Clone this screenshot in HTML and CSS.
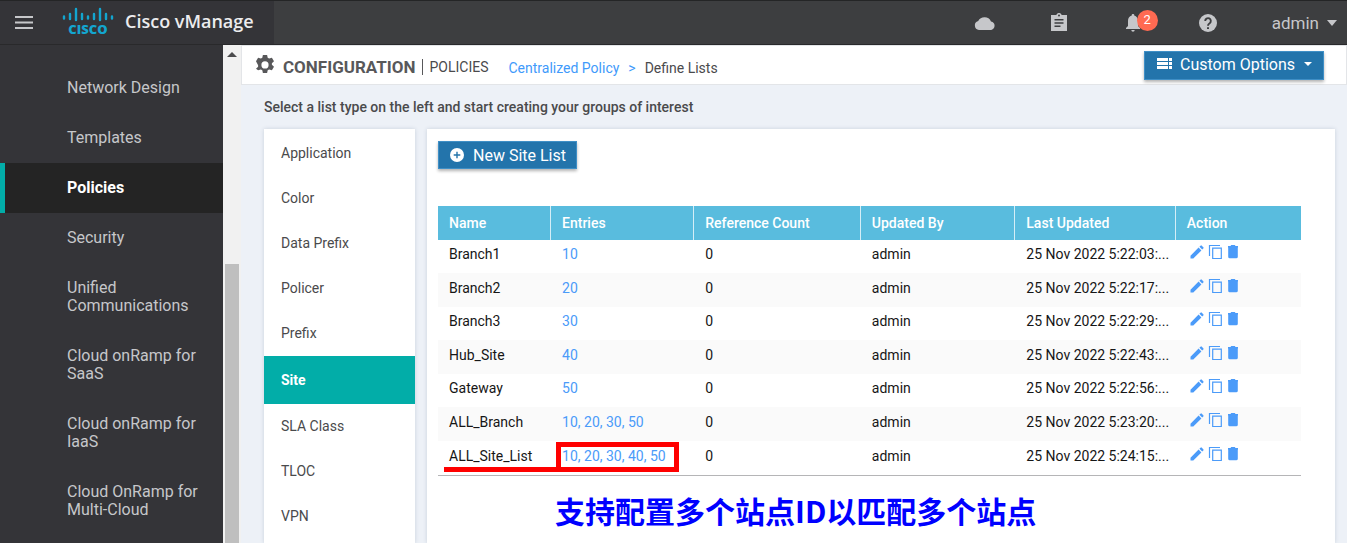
FILE: index.html
```html
<!DOCTYPE html>
<html lang="en">
<head>
<meta charset="utf-8">
<title>Cisco vManage</title>
<link rel="stylesheet" href="styles.css">
</head>
<body>
<svg class="sprite" aria-hidden="true">
  <symbol id="i-edit" viewBox="0 0 16 16"><path d="M1.5 14.5v-2.8L9.6 3.6l2.8 2.8-8.1 8.1zM10.4 2.8l1.1-1.1a.9.9 0 0 1 1.3 0l1.5 1.5a.9.9 0 0 1 0 1.3l-1.1 1.1z"/></symbol>
  <symbol id="i-copy" viewBox="0 0 16 16"><path d="M1.5 12V1.5H12M4.700 4.200h8.600v10.300H4.700z" fill="none" stroke="currentColor" stroke-width="1.200"/></symbol>
  <symbol id="i-trash" viewBox="0 0 12 16"><path d="M1 3.500V2h2.500l.7-.9h3.600l.7.9H11v1.500zM1.200 3.200h9.600v9.500a1.600 1.600 0 0 1-1.600 1.600H2.800a1.600 1.600 0 0 1-1.600-1.600z"/></symbol>
</svg>

<header class="topbar">
  <div class="brand">
    <button class="icon-btn menu" aria-label="Menu"><svg width="18" height="13" viewBox="0 0 18 13"><path d="M0 1h18M0 6.500h18M0 12h18" stroke="currentColor" stroke-width="2"/></svg></button>
    <svg class="logo" width="52" height="30" viewBox="0 0 52 30" role="img" aria-label="Cisco">
      <path d="M2 9.500v2M8 7v5M14 2v11M20 7v5M26 9.500v2M32 7v5M38 2v11M44 7v5M50 9.500v2" stroke="#13a5cf" stroke-width="2.400" stroke-linecap="round"/>
      <text x="26" y="27" text-anchor="middle">CISCO</text>
    </svg>
    <span class="product">Cisco vManage</span>
  </div>
  <nav class="tools" aria-label="Tools">
    <button class="icon-btn" aria-label="Cloud"><svg width="22" height="16" viewBox="0 0 22 16"><path d="M5 15a4.600 4.600 0 0 1-.8-9A7.200 7.200 0 0 1 17 6.400 4.400 4.400 0 0 1 17.200 15z" fill="currentColor"/></svg></button>
    <button class="icon-btn" aria-label="Tasks"><svg width="16" height="19" viewBox="0 0 16 19"><path fill="currentColor" fill-rule="evenodd" d="M0 2h5.300a2.800 2.800 0 0 1 5.400 0H16v16H0zM8 1.500a1 1 0 1 0 0 2 1 1 0 0 0 0-2zM3.500 6v1.500h9V6zm0 3.200v1.500h9V9.200zm0 3.200v1.500h6v-1.500z"/></svg></button>
    <button class="icon-btn bell" aria-label="Alarms, 2 new"><svg width="14" height="18" viewBox="0 0 14 18"><path fill="currentColor" d="M7 0a1.200 1.200 0 0 1 1.200 1.500C10.700 2.100 12 4.200 12 7v5l2 2v1H0v-1l2-2V7c0-2.800 1.300-4.900 3.800-5.500A1.200 1.200 0 0 1 7 0zM5.300 16h3.400a1.700 1.700 0 0 1-3.400 0z"/></svg><span class="badge">2</span></button>
    <button class="icon-btn" aria-label="Help"><svg width="18" height="18" viewBox="0 0 18 18"><circle cx="9" cy="9" r="9" fill="currentColor"/><path d="M6.200 7a2.800 2.800 0 1 1 4.500 2.200C9.500 10 9 10.400 9 11.700" fill="none" stroke="#3d3e40" stroke-width="1.900"/><path d="M8 13.200h2v1.900H8z" fill="#3d3e40"/></svg></button>
    <button class="user">admin <i class="caret"></i></button>
  </nav>
</header>

<div class="shell">
  <nav class="sidebar" aria-label="Main">
    <a href="#">Network Design</a>
    <a href="#">Templates</a>
    <a href="#" class="active">Policies</a>
    <a href="#">Security</a>
    <a href="#">Unified<br>Communications</a>
    <a href="#">Cloud onRamp for<br>SaaS</a>
    <a href="#">Cloud onRamp for<br>IaaS</a>
    <a href="#">Cloud OnRamp for<br>Multi-Cloud</a>
  </nav>
  <div class="scrollbar" aria-hidden="true"><i class="arrow"></i><i class="thumb"></i></div>

  <main class="content">
    <div class="pagebar">
      <svg class="gear" width="20" height="20" viewBox="0 0 20 20"><path fill="currentColor" fill-rule="evenodd" d="M7.900 0h4.200l.6 2.800 1.400.8 2.800-.9 2.100 3.600-2.100 2v1.500l2.100 1.900-2.100 3.600-2.800-.8-1.400.8-.6 2.700H7.900l-.6-2.700-1.400-.8-2.800.8L1 13.700l2.100-1.900v-1.500L1 6.300l2.100-3.600 2.800.9 1.400-.8zM10 6.300a3.600 3.600 0 1 0 0 7.200 3.600 3.600 0 0 0 0-7.200z"/></svg>
      <h1>CONFIGURATION</h1>
      <span class="section">POLICIES</span>
      <div class="crumbs"><a href="#">Centralized Policy</a><span class="sep">&gt;</span><span>Define Lists</span></div>
      <button class="primary custom"><svg width="15" height="12" viewBox="0 0 15 12"><path fill="currentColor" d="M0 0h11v3H0zm12 0h3v3h-3zM0 4h11v3H0zm12 0h3v3h-3zM0 8h11v3H0zm12 0h3v3h-3z"/></svg>Custom Options<i class="caret"></i></button>
    </div>
    <p class="hint">Select a list type on the left and start creating your groups of interest</p>
    <div class="panels">
      <nav class="types" aria-label="List types">
        <a href="#">Application</a>
        <a href="#">Color</a>
        <a href="#">Data Prefix</a>
        <a href="#">Policer</a>
        <a href="#">Prefix</a>
        <a href="#" class="active">Site</a>
        <a href="#">SLA Class</a>
        <a href="#">TLOC</a>
        <a href="#">VPN</a>
      </nav>
      <section class="lists">
        <button class="primary new"><svg width="14" height="14" viewBox="0 0 14 14"><circle cx="7" cy="7" r="7" fill="currentColor"/><path d="M7 3.700v6.600M3.700 7h6.600" stroke="#2374ab" stroke-width="1.400"/></svg>New Site List</button>
        <table>
          <colgroup><col class="c-name"><col class="c-entries"><col class="c-ref"><col class="c-by"><col class="c-date"><col class="c-action"></colgroup>
          <thead><tr><th>Name</th><th>Entries</th><th>Reference Count</th><th>Updated By</th><th>Last Updated</th><th>Action</th></tr></thead>
          <tbody>
            <tr><td>Branch1</td><td><a href="#">10</a></td><td>0</td><td>admin</td><td>25 Nov 2022 5:22:03:...</td><td class="actions"><button aria-label="Edit"><svg><use href="#i-edit"/></svg></button><button aria-label="Copy"><svg><use href="#i-copy"/></svg></button><button aria-label="Delete"><svg class="slim"><use href="#i-trash"/></svg></button></td></tr>
            <tr><td>Branch2</td><td><a href="#">20</a></td><td>0</td><td>admin</td><td>25 Nov 2022 5:22:17:...</td><td class="actions"><button aria-label="Edit"><svg><use href="#i-edit"/></svg></button><button aria-label="Copy"><svg><use href="#i-copy"/></svg></button><button aria-label="Delete"><svg class="slim"><use href="#i-trash"/></svg></button></td></tr>
            <tr><td>Branch3</td><td><a href="#">30</a></td><td>0</td><td>admin</td><td>25 Nov 2022 5:22:29:...</td><td class="actions"><button aria-label="Edit"><svg><use href="#i-edit"/></svg></button><button aria-label="Copy"><svg><use href="#i-copy"/></svg></button><button aria-label="Delete"><svg class="slim"><use href="#i-trash"/></svg></button></td></tr>
            <tr><td>Hub_Site</td><td><a href="#">40</a></td><td>0</td><td>admin</td><td>25 Nov 2022 5:22:43:...</td><td class="actions"><button aria-label="Edit"><svg><use href="#i-edit"/></svg></button><button aria-label="Copy"><svg><use href="#i-copy"/></svg></button><button aria-label="Delete"><svg class="slim"><use href="#i-trash"/></svg></button></td></tr>
            <tr><td>Gateway</td><td><a href="#">50</a></td><td>0</td><td>admin</td><td>25 Nov 2022 5:22:56:...</td><td class="actions"><button aria-label="Edit"><svg><use href="#i-edit"/></svg></button><button aria-label="Copy"><svg><use href="#i-copy"/></svg></button><button aria-label="Delete"><svg class="slim"><use href="#i-trash"/></svg></button></td></tr>
            <tr><td>ALL_Branch</td><td><a href="#">10, 20, 30, 50</a></td><td>0</td><td>admin</td><td>25 Nov 2022 5:23:20:...</td><td class="actions"><button aria-label="Edit"><svg><use href="#i-edit"/></svg></button><button aria-label="Copy"><svg><use href="#i-copy"/></svg></button><button aria-label="Delete"><svg class="slim"><use href="#i-trash"/></svg></button></td></tr>
            <tr><td class="mark-line">ALL_Site_List</td><td class="mark-box"><a href="#">10, 20, 30, 40, 50</a></td><td>0</td><td>admin</td><td>25 Nov 2022 5:24:15:...</td><td class="actions"><button aria-label="Edit"><svg><use href="#i-edit"/></svg></button><button aria-label="Copy"><svg><use href="#i-copy"/></svg></button><button aria-label="Delete"><svg class="slim"><use href="#i-trash"/></svg></button></td></tr>
          </tbody>
        </table>
        <p class="note" lang="zh-CN">支持配置多个站点ID以匹配多个站点</p>
      </section>
    </div>
  </main>
</div>
</body>
</html>
```
FILE: styles.css
```css
*, *::after { box-sizing: border-box; }

body {
  margin: 0;
  height: 100vh;
  display: flex;
  flex-direction: column;
  overflow: hidden;
  font-family: Roboto, "Liberation Sans", sans-serif;
  font-size: 14px;
  color: #4a4a4c;
  background: #edf1f7;
}

a { color: inherit; text-decoration: none; }

button {
  font-family: inherit;
  border: 0;
  padding: 0;
  background: none;
  color: inherit;
}

.sprite { display: none; }

/* Top bar */
.topbar {
  flex: 0 0 45px;
  display: flex;
  justify-content: space-between;
  background: #3d3e40;
  border-top: 1px solid #242526;
  border-bottom: 1px solid #29292b;
  color: #c6c7ca;
}

.brand {
  width: 274px;
  display: flex;
  align-items: center;
  padding-left: 15px;
  background: #343438;
}

.icon-btn { display: flex; position: relative; }
.logo { margin: 0 0 2px 29px; }

.logo text {
  font-family: "Open Sans", sans-serif;
  font-size: 13px;
  font-weight: 800;
  fill: #13a5cf;
}

.product {
  margin: 0 0 3px 11px;
  font-family: "Open Sans", sans-serif;
  font-size: 18px;
  font-weight: 600;
  color: #ececee;
}

.tools {
  display: flex;
  align-items: center;
  padding-right: 10px;
}

.tools .icon-btn { margin-right: 55px; }
.tools .bell { margin: 0 59px 0 4px; }

.badge {
  position: absolute;
  left: 11px;
  top: -4px;
  width: 21px;
  height: 21px;
  border-radius: 50%;
  background: #ff6a52;
  color: #fff;
  font-size: 13px;
  line-height: 19px;
}

.user {
  display: flex;
  align-items: center;
  gap: 8px;
  font-size: 17px;
}

.caret {
  border: 5px solid transparent;
  border-top: 6px solid currentColor;
  border-bottom: 0;
}

/* Left navigation */
.shell { flex: 1; min-height: 0; display: flex; }

.sidebar {
  flex: 0 0 223px;
  padding-top: 18px;
  background: #343438;
  color: #c6c7ca;
  font-size: 16px;
  line-height: 18px;
}

.sidebar a { display: block; padding: 16px 0 16px 67px; }

.sidebar .active {
  background: #242424;
  border-left: 5px solid #02ada8;
  padding-left: 62px;
  color: #fff;
  font-weight: 700;
}

.scrollbar {
  flex: 0 0 18px;
  display: flex;
  flex-direction: column;
  align-items: center;
  background: #f1f1f1;
}

.arrow {
  margin: 7px 0 207px;
  border: 5px solid transparent;
  border-bottom-color: #4b4b4d;
  border-top: 0;
}

.thumb { flex: 1; width: 14px; background: #bfbfbf; }

/* Page heading */
.content { flex: 1; min-width: 0; display: flex; flex-direction: column; }

.pagebar {
  flex: 0 0 40px;
  display: flex;
  align-items: center;
  padding: 0 22px 0 13px;
  background: #fff;
  border: 1px solid #e3e5e8;
  white-space: nowrap;
  color: #4a4a4c;
}

.gear { color: #58585a; }
h1 { margin: 4px 0 0 8px; font-size: 17px; font-weight: 700; color: #58585a; }

.section {
  margin: 4px 0 0 7px;
  padding-left: 6px;
  border-left: 1px solid #58585a;
  font-size: 14px;
}

.crumbs { margin: 5px 0 0 20px; display: flex; gap: 9px; font-size: 14px; }
.crumbs a, .sep { color: #3f9afb; }

.primary {
  display: flex;
  align-items: center;
  color: #fff;
  background: #2374ab;
  border: 1px solid #3f8fc6;
  box-shadow: 0 2px 3px rgba(0, 0, 0, 0.3);
  font-size: 16px;
}

.custom { margin-left: auto; height: 29px; padding: 0 11px 2px 12px; }
.custom svg { margin-right: 8px; }
.custom .caret { margin-left: 9px; border-width: 4px 4px 0; }

.hint {
  margin: 14px 0 13px 23px;
  font-size: 14px;
  line-height: 17px;
  font-weight: 500;
}

/* Panels */
.panels {
  flex: 1;
  min-height: 0;
  display: flex;
  gap: 12px;
  padding: 0 12px 0 23px;
}

.types, .lists { background: #fff; box-shadow: 0 0 4px rgba(60, 80, 110, 0.2); }
.types { flex: 0 0 151px; padding-top: 2px; }

.types a {
  display: block;
  padding-left: 17px;
  font-size: 14px;
  line-height: 45px;
}

.types .active {
  background: #02ada8;
  color: #fff;
  font-weight: 700;
  line-height: 48px;
}

.lists { flex: 1; min-width: 0; padding: 12px 34px 0 11px; }
.new { height: 28px; padding: 0 10px 0 11px; }
.new svg { margin-right: 9px; }

/* Site table */
table {
  width: 100%;
  margin-top: 37px;
  table-layout: fixed;
  border-collapse: separate;
  border-spacing: 0;
  border-bottom: 1px solid #b5b5b7;
}

.c-name { width: 13.1%; }
.c-entries { width: 16.6%; }
.c-ref { width: 19.3%; }
.c-by { width: 17.9%; }
.c-date { width: 18.6%; }

th {
  height: 34px;
  padding: 0 11px;
  background: #59bcde;
  border-right: 1px solid #d5eef7;
  color: #fff;
  font-size: 14px;
  font-weight: 500;
  text-align: left;
}

th:last-child { border-right: 0; }

td {
  height: 33px;
  padding: 0 3px 5px 11px;
  color: #161616;
  white-space: nowrap;
}

tr:nth-child(even) td { height: 34px; background: #fafafa; }
tr:last-child td { height: 34px; }
td a { color: #4b9bf9; }
td.actions { padding: 0 0 9px 13px; font-size: 0; }
.actions button { margin-right: 3px; color: #4b9bf9; }
.actions svg { display: block; width: 16px; height: 16px; fill: currentColor; }
.actions .slim { width: 12px; }

/* Highlight drawn over the last row */
.mark-line, .mark-box { position: relative; }

.mark-line::after {
  content: "";
  position: absolute;
  left: 6px;
  right: -5px;
  bottom: 3px;
  height: 5px;
  background: #f00;
}

.mark-box::after {
  content: "";
  position: absolute;
  left: 5px;
  top: 1px;
  bottom: 3px;
  width: 123px;
  border: 5px solid #f00;
}

.note {
  margin: 12px 0 0 117px;
  color: #00f;
  font-family: "Noto Sans CJK SC", sans-serif;
  font-size: 30px;
  font-weight: 700;
  line-height: 44px;
}
```
